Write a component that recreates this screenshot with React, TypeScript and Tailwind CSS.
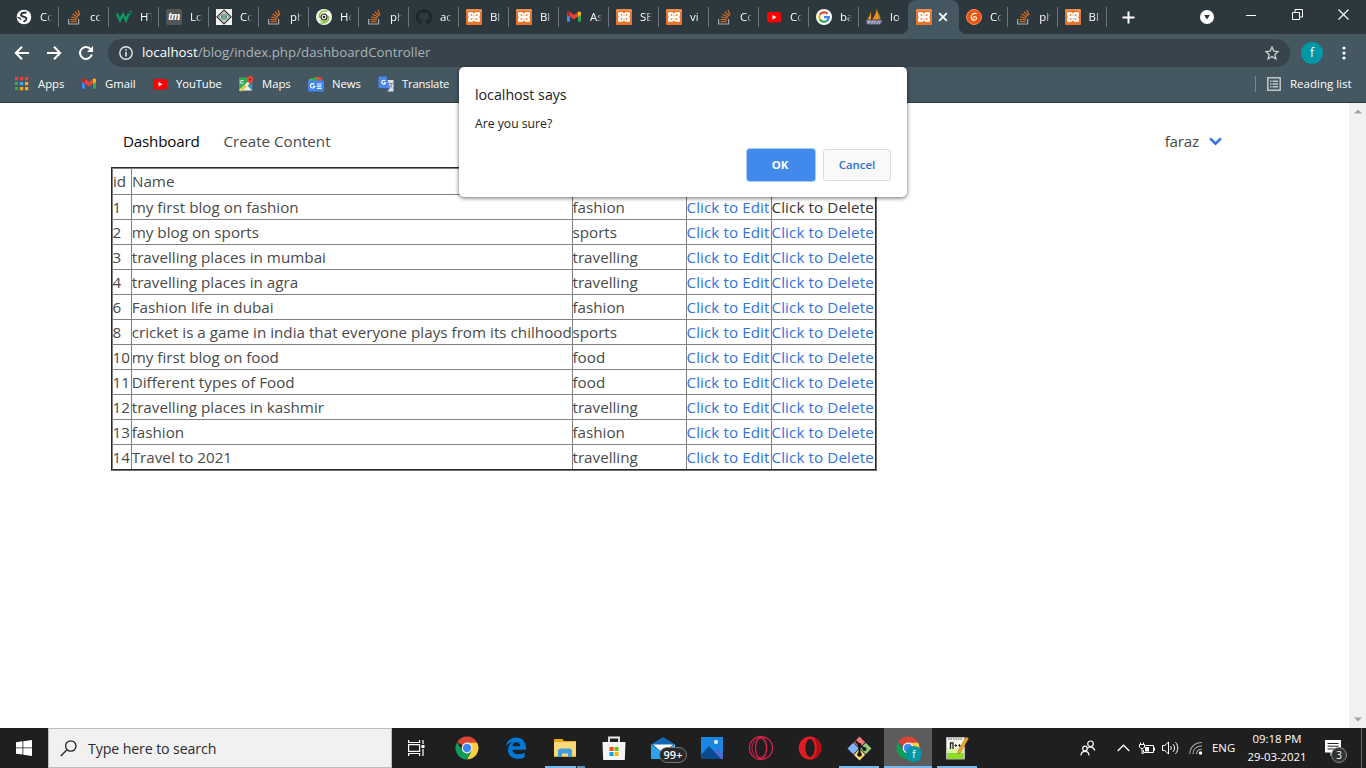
import type { ReactNode } from "react";

const XamppIcon = () => (
  <svg width="16" height="16" viewBox="0 0 16 16">
    <rect width="16" height="16" rx="1" fill="#e9742a" />
    <path d="M1 3V1h14v2" stroke="#f3a56f" fill="none" />
    <path d="M2.500 3.700h4L8 5l1.500-1.300h4V6.500L12.700 8l.8 1.500v2.800h-4L8 11l-1.500 1.300h-4V9.500L3.300 8l-.8-1.500z" fill="#fff" stroke="#fff" strokeLinejoin="round" />
    <path d="M4.700 6.100h1.600M9.700 6.100h1.600M4.700 9.900h1.600M9.700 9.900h1.600" stroke="#e9742a" strokeWidth="1.500" />
    <path d="M8 5.500v1M8 9.500v1" stroke="#e9742a" />
  </svg>
);
const StackIcon = () => (
  <svg width="16" height="16" viewBox="0 0 16 16" fill="none">
    <path d="M2.600 10v5h10v-5" stroke="#a5a9ac" strokeWidth="1.200" />
    <path d="M4.500 12.700h6.300M4.600 10.400l6.200.6M5.200 7.800l6 1.700M6.600 5l5.400 3.200M9 2.600l4 4.600M12 1l1.900 5.200" stroke="#e0701c" strokeWidth="1.150" />
  </svg>
);
const GlobeIcon = () => (
  <svg width="16" height="16" viewBox="0 0 16 16">
    <circle cx="8" cy="8" r="7.300" fill="#fff" />
    <path d="M10.500 3.500C8 3.500 5 4.200 5 6c0 2.200 5.500 1.200 5.500 3.700 0 1.800-2 2-2.800 3.300" stroke="#2d383f" strokeWidth="1.900" fill="none" />
    <path d="M1.500 8.500c2 .2 3 .8 3.500 2.300" stroke="#2d383f" strokeWidth="1.300" fill="none" />
  </svg>
);
const W3Icon = () => (
  <svg width="16" height="16" viewBox="0 0 16 16" fill="none">
    <path d="M.8 4.500 4 11.300l3-6 3 6 2.800-6.500" stroke="#0b9b61" strokeWidth="2.400" />
    <path d="M13 2h2.300l-1.200 1.400c1.600 0 1.600 2.100 0 2.100l-1.200-.4" stroke="#0b9b61" strokeWidth=".8" />
  </svg>
);
const TmIcon = () => (
  <span className="flex h-4 w-4 items-center justify-center rounded-xs bg-[#555] pb-0.5 font-['Liberation_Serif',serif] text-[12px] leading-none font-bold tracking-[-0.500px] text-white italic">tm</span>
);
const DiamondIcon = () => (
  <svg width="16" height="16" viewBox="0 0 16 16" fill="none">
    <rect width="16" height="16" fill="#f5f5f5" />
    <path d="m8 1 7 7-7 7-7-7z" stroke="#333" strokeWidth="1.200" />
    <path d="m8 3 5 5-5 5-5-5z" stroke="#888" strokeWidth=".7" />
    <circle cx="8" cy="8" r="3" fill="#4f8d69" />
    <path d="M6.500 7h3M6.500 9.300h3" stroke="#dfe9e3" strokeWidth=".8" />
  </svg>
);
const SpiralIcon = () => (
  <svg width="16" height="16" viewBox="0 0 16 16" fill="none">
    <circle cx="8" cy="8" r="8" fill="#f6faef" />
    <path d="M11.500 2C5.500 1 2.300 4.500 3.500 9M4.500 14c6 1 9.200-2.500 8-7" stroke="#8cc63f" strokeWidth="1.500" />
    <circle cx="8" cy="8" r="3" stroke="#222" strokeWidth="1.200" />
    <circle cx="8" cy="8" r="1.200" fill="#222" />
    <path d="M3.800 10.800c2.200 2.400 6 2.300 7.700.7" stroke="#8cc63f" strokeWidth="1.200" />
  </svg>
);
const GithubIcon = () => (
  <svg width="16" height="16" viewBox="0 0 16 16">
    <path fill="#1d272e" d="M8 0C3.580 0 0 3.580 0 8c0 3.540 2.290 6.530 5.470 7.590.4.070.55-.17.55-.38 0-.19-.01-.82-.01-1.490-2.010.37-2.530-.49-2.690-.94-.09-.23-.48-.94-.82-1.130-.28-.15-.68-.52-.01-.53.63-.01 1.080.58 1.230.82.72 1.210 1.870.87 2.330.66.07-.52.28-.87.51-1.070-1.780-.2-3.640-.89-3.640-3.950 0-.87.31-1.590.82-2.150-.08-.2-.36-1.020.08-2.120 0 0 .67-.21 2.200.82.64-.18 1.320-.27 2-.27s1.360.09 2 .27c1.530-1.040 2.200-.82 2.200-.82.44 1.100.16 1.920.08 2.120.51.56.82 1.270.82 2.150 0 3.070-1.870 3.750-3.650 3.950.29.25.54.73.54 1.480 0 1.070-.01 1.930-.01 2.200 0 .21.15.46.55.38A8.010 8.010 0 0 0 16 8c0-4.420-3.580-8-8-8" />
  </svg>
);
const GmailIcon = () => (
  <svg width="16" height="16" viewBox="0 0 16 16">
    <path d="M1 4.500v8.300h3V7.500z" fill="#4285f4" />
    <path d="M15 4.500v8.300h-3V7.500z" fill="#34a853" />
    <path d="M12 3.500V8l3-2.300V4.300C15 2.500 13.200 2 12 3z" fill="#fbbc04" />
    <path d="M1 4.300C1 2.500 2.800 2 4 3l4 3 4-3v4.600l-4 3-4-3L1 5.500z" fill="#ea4335" />
    <path d="M1 4.300C1 2.500 2.800 2 4 3v4.700L1 5.500z" fill="#c5221f" />
  </svg>
);
const YoutubeIcon = () => (
  <svg width="16" height="16" viewBox="0 0 16 16">
    <rect x="1" y="3" width="14" height="10.500" rx="2.600" fill="#f00" />
    <path d="m6.500 6 4 2.250-4 2.250z" fill="#fff" />
  </svg>
);
const GoogleIcon = () => (
  <svg width="16" height="16" viewBox="0 0 16 16" fill="none" strokeWidth="2.200">
    <circle cx="8" cy="8" r="8" fill="#fff" />
    <path d="M11.500 4.800A4.800 4.800 0 0 0 3.800 5.700" stroke="#ea4335" />
    <path d="M3.800 5.700a4.800 4.800 0 0 0 0 4.600" stroke="#fbbc05" />
    <path d="M3.800 10.300a4.800 4.800 0 0 0 7.300 1.300" stroke="#34a853" />
    <path d="M11.100 11.600c1.200-1 1.700-2.200 1.700-3.400H8" stroke="#4285f4" />
  </svg>
);
const PmaIcon = () => (
  <svg width="16" height="16" viewBox="0 0 16 16">
    <path d="M5 2v8.500H1.200C3 8 4.500 5 5 2zM10.500 0c1.500 3 3 7 2.500 10.500H6C8.500 8 10.300 4 10.500 0z" fill="#f29111" />
    <path d="M11.500 3c1.800 2 3.200 5 3 7.500h-2z" fill="#b0803a" />
    <path d="M0 11h16v2l-2 2.500H2L.5 14z" fill="#777a9b" />
    <path d="M2 15v-3h2v1.500H2M6 15v-3l1.500 1.500L9 12v3M11 15l1.500-3 1.500 3" stroke="#c9cbe0" strokeWidth=".7" fill="none" />
  </svg>
);
const OrangeCircleIcon = () => (
  <svg width="16" height="16" viewBox="0 0 16 16">
    <circle cx="8" cy="8" r="7.500" fill="#f0530f" stroke="#f58a5c" />
    <path d="M10.500 4.500C7 3.800 5 6 5.200 8.500c.2 2 1.500 3 3 2.900 3-.2 3-4 .3-3.900-1.200.1-1.700 1.100-1.200 2" stroke="#fff" strokeWidth="1.100" fill="none" strokeLinecap="round" />
  </svg>
);
const MapsIcon = () => (
  <svg width="16" height="16" viewBox="0 0 16 16">
    <path d="M1 1.500h13v13H1z" fill="#34a853" />
    <path d="M2 14.500 8 8l6 6.500z" fill="#eee" />
    <path d="m14.500 8.500-3.500 1 3.500 5z" fill="#4285f4" />
    <path d="m1 14 12-11 1.500 2L3 15.500z" fill="#f4f4f4" />
    <path d="m7 9 1.700 1.500L3.500 15H1.200z" fill="#fbbc04" />
    <path d="M5.500 4.500H3.800a1.500 1.500 0 1 0 1.300 1.800" stroke="#fff" fill="none" />
    <path d="M12 0a3.200 3.200 0 0 1 3.200 3.200c0 2-2.400 2.800-3.200 6-.8-3.200-3.200-4-3.200-6A3.200 3.200 0 0 1 12 0z" fill="#ea4335" />
    <circle cx="12" cy="3.300" r="1.100" fill="#8f1d14" />
  </svg>
);
const NewsIcon = () => (
  <svg width="16" height="16" viewBox="0 0 16 16" fill="none">
    <path d="m1 3.500 9-2.500 1 4H1z" fill="#fbbc04" />
    <path d="m8.500.5 6 1.500-1 4h-5z" fill="#ea4335" />
    <path d="M2.500 2H10v4H2.500z" fill="#34a853" />
    <rect y="4.500" width="16" height="11" rx="1" fill="#4285f4" />
    <path d="M6.300 8.300a2.200 2.200 0 1 0 .5 2H5M9 8h4.500M9 10.200h4.500M9 12.400h4.500" stroke="#fff" strokeWidth="1.200" />
  </svg>
);
const TranslateIcon = () => (
  <svg width="16" height="16" viewBox="0 0 16 16" fill="none">
    <path d="M7 4h8.500v11.500H9.500z" fill="#dfe2e6" />
    <path d="M1 .5h7.500L12 12H1.500a1 1 0 0 1-1-1V1z" fill="#4b87e8" />
    <path d="m8 12 1.600 3.500L12 12z" fill="#2b5fc0" />
    <path d="M7.200 4.800a2 2 0 1 0 .5 1.900H5.800" stroke="#fff" strokeWidth="1.100" />
    <path d="M10.500 7.500h4.300M12.500 6.500v1M14 7.700c-.4 1.800-1.300 3.200-2.500 4.100M11.700 9c.6 1.300 1.500 2.200 2.800 3" stroke="#6b7a8c" strokeWidth=".8" />
  </svg>
);
const AppsIcon = () => (
  <svg width="16" height="16" viewBox="0 0 16 16">
    <path d="M1 1h3.200v3.200H1zM6 1h3.200v3.200H6zM11 1h3.200v3.200H11z" fill="#ea4335" />
    <path d="M1 6h3.200v3.200H1z" fill="#34a853" />
    <path d="M6 6h3.200v3.200H6z" fill="#4a9cf5" />
    <path d="M11 6h3.200v3.200H11zM6 11h3.200v3.200H6zM11 11h3.200v3.200H11z" fill="#fbab18" />
    <path d="M1 11h3.200v3.200H1z" fill="#34a853" />
  </svg>
);

interface TabInfo { icon: ReactNode; title: string }
const leftTabs: TabInfo[] = [
  { icon: <GlobeIcon />, title: "Co" },
  { icon: <StackIcon />, title: "cc" },
  { icon: <W3Icon />, title: "HT" },
  { icon: <TmIcon />, title: "Lo" },
  { icon: <DiamondIcon />, title: "Co" },
  { icon: <StackIcon />, title: "ph" },
  { icon: <SpiralIcon />, title: "Ho" },
  { icon: <StackIcon />, title: "ph" },
  { icon: <GithubIcon />, title: "ac" },
  { icon: <XamppIcon />, title: "Bl" },
  { icon: <XamppIcon />, title: "Bl" },
  { icon: <GmailIcon />, title: "As" },
  { icon: <XamppIcon />, title: "SE" },
  { icon: <XamppIcon />, title: "vi" },
  { icon: <StackIcon />, title: "Co" },
  { icon: <YoutubeIcon />, title: "Co" },
  { icon: <GoogleIcon />, title: "ba" },
  { icon: <PmaIcon />, title: "lo" },
];
const rightTabs: TabInfo[] = [
  { icon: <OrangeCircleIcon />, title: "Co" },
  { icon: <StackIcon />, title: "ph" },
  { icon: <XamppIcon />, title: "Bl" },
];

const TabContent = ({ icon, title }: TabInfo) => (
  <>
    <span className="h-4 w-4 shrink-0">{icon}</span>
    <span className="ml-2 w-3 overflow-hidden text-[11.400px] leading-4 whitespace-nowrap text-white [mask-image:linear-gradient(to_right,black_55%,transparent)]">{title}</span>
  </>
);

const TabStrip = () => (
  <div className="flex h-[34px] bg-[#2c373e] pl-[9px]">
    {leftTabs.map((tab, i) => (
      <div key={i} className="flex h-[34px] w-[50px] shrink-0 items-center pl-[7px]">
        <TabContent {...tab} />
        {i < leftTabs.length - 1 && <span className="ml-auto h-5 w-px bg-[#6a747a]" />}
      </div>
    ))}
    <div className="relative -ml-px flex h-[34px] w-[51px] shrink-0 items-center rounded-t-lg bg-[#455760] pl-2">
      <span className="absolute bottom-0 -left-2 h-2 w-2 bg-[radial-gradient(circle_at_0_0,transparent_8px,#455760_8.5px)]" />
      <span className="absolute -right-2 bottom-0 h-2 w-2 bg-[radial-gradient(circle_at_100%_0,transparent_8px,#455760_8.5px)]" />
      <XamppIcon />
      <svg className="ml-1.5" width="10" height="10" viewBox="0 0 10 10"><path d="m1.200 1.200 7.600 7.600m0-7.600L1.200 8.800" stroke="#fff" strokeWidth="1.800" /></svg>
    </div>
    {rightTabs.map((tab, i) => (
      <div key={i} className="flex h-[34px] w-[49.300px] shrink-0 items-center pl-[7px]">
        <TabContent {...tab} />
        <span className="ml-auto h-5 w-px bg-[#6a747a]" />
      </div>
    ))}
    <div className="flex flex-1 items-center">
      <svg className="ml-[15px]" width="13" height="13" viewBox="0 0 13 13"><path d="M6.500.5v12M.5 6.500h12" stroke="#fff" strokeWidth="2" /></svg>
      <svg className="ml-[65px]" width="14" height="14" viewBox="0 0 14 14"><circle cx="7" cy="7" r="7" fill="#fff" /><path d="M4 5h6L7 9.500z" fill="#2c373e" /></svg>
      <svg className="mb-1 ml-8" width="10" height="10" viewBox="0 0 10 10"><path d="M0 5.500h10" stroke="#fff" /></svg>
      <svg className="mb-1.5 ml-9" width="11" height="11" viewBox="0 0 11 11" fill="none" stroke="#fff"><path d="M.5 3.500h7v7h-7zM3 3V.5h7.500V8H8" /></svg>
      <svg className="mb-1.5 ml-[35px]" width="11" height="11" viewBox="0 0 11 11"><path d="m.5.5 10 10m0-10-10 10" stroke="#fff" strokeWidth="1.100" /></svg>
    </div>
  </div>
);

const Toolbar = () => (
  <div className="flex h-[33px] items-center bg-[#455760]">
    <div className="mt-1 flex w-[108px] items-center gap-4 pl-3.5">
      <svg width="16" height="16" viewBox="0 0 16 16" fill="none" stroke="#fff" strokeWidth="2"><path d="M15 8H2.500M8 1.800 1.800 8 8 14.200" /></svg>
      <svg width="16" height="16" viewBox="0 0 16 16" fill="none" stroke="#fff" strokeWidth="2"><path d="M1 8h12.500M8 1.800 14.200 8 8 14.200" /></svg>
      <svg width="16" height="16" viewBox="0 0 16 16" fill="none" stroke="#fff" strokeWidth="2"><path d="M13.800 9.500A6 6 0 1 1 12.500 4L14 5.500" /><path d="M15 1v6H9z" fill="#fff" stroke="none" /></svg>
    </div>
    <div className="mt-1 flex h-7 w-[1182px] items-center rounded-full bg-[#38444c] pl-[11px] text-[13.300px] text-[#a9b2b8]">
      <svg width="14" height="14" viewBox="0 0 14 14" fill="none" stroke="#e4e7e9" strokeWidth="1.400"><circle cx="7" cy="7" r="6.200" /><path d="M7 6v4.500M7 3.300v1.500" strokeWidth="1.600" /></svg>
      <span className="ml-[9px] whitespace-nowrap"><span className="text-white">localhost</span>/blog/index.php/dashboardController</span>
      <svg className="mr-[11px] ml-auto" width="14" height="14" viewBox="0 0 14 14"><path d="m7 1 1.800 4.100 4.500.4-3.400 3 1 4.400L7 10.600l-3.900 2.300 1-4.400-3.400-3 4.500-.4z" fill="none" stroke="#c8cdd0" strokeWidth="1.300" /></svg>
    </div>
    <span className="mt-1 ml-[11px] flex h-[22px] w-[22px] items-center justify-center rounded-full bg-[#0097a7] text-[12px] leading-none text-white">f</span>
    <svg className="mt-1 ml-[19px]" width="4" height="14" viewBox="0 0 4 14" fill="#fff"><circle cx="2" cy="2" r="1.600" /><circle cx="2" cy="7" r="1.600" /><circle cx="2" cy="12" r="1.600" /></svg>
  </div>
);

const Bookmark = ({ icon, label, width }: { icon: ReactNode; label: string; width: string }) => (
  <div className={`flex shrink-0 items-center gap-2 ${width}`}>
    {icon}
    <span className="pt-px">{label}</span>
  </div>
);

const BookmarksBar = () => (
  <div className="flex h-9 items-center border-b border-[#2c373e] bg-[#455760] pb-px pl-3.5 text-[11.300px] text-white">
    <Bookmark icon={<AppsIcon />} label="Apps" width="w-[67px]" />
    <Bookmark icon={<GmailIcon />} label="Gmail" width="w-[71px]" />
    <Bookmark icon={<YoutubeIcon />} label="YouTube" width="w-[86px] tracking-[-0.100px]" />
    <Bookmark icon={<MapsIcon />} label="Maps" width="w-[70px]" />
    <Bookmark icon={<NewsIcon />} label="News" width="w-[70px]" />
    <Bookmark icon={<TranslateIcon />} label="Translate" width="w-[90px] tracking-[-0.200px]" />
    <div className="mr-[14px] ml-auto flex items-center">
      <span className="h-4 w-px bg-[#7b878e]" />
      <svg className="mr-2 ml-[11px]" width="14" height="14" viewBox="0 0 14 14" fill="none" stroke="#c3c8cb"><rect x=".8" y=".8" width="12.400" height="12.400" strokeWidth="1.500" /><path d="M3 4.200h1.500M3 7h1.500M3 9.800h1.500M5.500 4.200H11M5.500 7H11M5.500 9.800H11" strokeWidth="1.400" /></svg>
      <span className="w-[63px] pl-px text-[11.500px] whitespace-nowrap">Reading list</span>
    </div>
  </div>
);

const rows: [string, string, string][] = [
  ["1", "my first blog on fashion", "fashion"],
  ["2", "my blog on sports", "sports"],
  ["3", "travelling places in mumbai", "travelling"],
  ["4", "travelling places in agra", "travelling"],
  ["6", "Fashion life in dubai", "fashion"],
  ["8", "cricket is a game in india that everyone plays from its chilhood", "sports"],
  ["10", "my first blog on food", "food"],
  ["11", "Different types of Food", "food"],
  ["12", "travelling places in kashmir", "travelling"],
  ["13", "fashion", "fashion"],
  ["14", "Travel to 2021", "travelling"],
];

const PostsTable = () => (
  <div className="ml-[111px] w-[766px] border border-[#2b2b2b] border-r-[#6f6f6f] border-b-[#6f6f6f]">
    <div className="border border-t-[#808080] border-r-[#2b2b2b] border-b-[#2b2b2b] border-l-[#808080] text-[15.200px] leading-6 whitespace-nowrap text-[#4a4a4a]">
      <div className="grid h-[26px] grid-cols-[19px_441px_114px_85px_103px] border-b border-[#808080] leading-[25px]">
        <span className="border-r border-[#808080]">id</span>
        <span className="border-r border-[#808080]">Name</span>
        <span className="border-r border-[#808080]" />
        <span className="border-r border-[#808080]" />
        <span />
      </div>
      {rows.map(([id, name, category], i) => (
        <div key={id} className="grid h-[25px] grid-cols-[19px_441px_114px_85px_103px] border-b border-[#808080] last:h-6 last:border-b-0">
          <span className="border-r border-[#808080] -indent-[0.500px]">{id}</span>
          <span className="border-r border-[#808080] -indent-[0.300px] tracking-[0.015px]">{name}</span>
          <span className="border-r border-[#808080] -indent-[0.500px]">{category}</span>
          <a className="border-r border-[#808080] -indent-[0.500px] tracking-[0.080px] text-[#3273dc]">Click to Edit</a>
          <a className={`-indent-[0.500px] tracking-[0.100px] ${i === 0 ? "text-[#363636]" : "text-[#3273dc]"}`}>Click to Delete</a>
        </div>
      ))}
    </div>
  </div>
);

const Page = () => (
  <div className="flex h-[625px] bg-white">
    <main className="flex-1">
      <nav className="flex h-16 items-center pt-3 pr-[127px] pl-[123px] text-[15.200px] text-[#4a4a4a]">
        <a className="w-[100.500px] tracking-[-0.200px] text-[#0a0a0a]">Dashboard</a>
        <a className="tracking-[-0.020px]">Create Content</a>
        <a className="ml-auto tracking-[-0.200px]">faraz</a>
        <svg className="ml-2.5" width="13" height="9" viewBox="0 0 13 9" fill="none"><path d="m1 1.300 5.500 5.400L12 1.300" stroke="#3273dc" strokeWidth="2.500" /></svg>
      </nav>
      <PostsTable />
    </main>
    <div className="flex w-[17px] flex-col items-center justify-between bg-[#f1f1f1] py-1.5">
      <svg width="8" height="5" viewBox="0 0 8 5"><path d="m4 .5 4 4H0z" fill="#a3a3a3" /></svg>
      <svg width="8" height="5" viewBox="0 0 8 5"><path d="m4 4.500 4-4H0z" fill="#a3a3a3" /></svg>
    </div>
  </div>
);

const Dialog = () => (
  <div className="absolute top-[67px] left-[459px] flex h-[130px] w-[448px] flex-col rounded-[5px] bg-white px-4 pt-[17px] pb-4 text-[#202124] shadow-[0_1px_4px_rgba(0,0,0,0.6)]">
    <span className="text-[14.200px] leading-[22px]">localhost says</span>
    <span className="mt-[9px] text-[12.200px] leading-[18px]">Are you sure?</span>
    <div className="mt-auto flex justify-end gap-2 text-[11.400px] font-semibold">
      <button className="h-8 w-[68px] rounded-[3px] bg-[#4189eb] pr-0.5 text-[11.400px] font-bold text-white shadow-[0_0_0_1px_#a6c8f6]">OK</button>
      <button className="h-8 w-[68px] rounded-[3px] border border-[#dadce0] bg-[#fafafa] text-[#2a6fdb]">Cancel</button>
    </div>
  </div>
);

const ChromeIcon = () => (
  <svg width="24" height="24" viewBox="0 0 24 24">
    <path d="M12 12 2.040 6.250A11.500 11.500 0 0 1 21.960 6.250L12 12z" fill="#db4437" />
    <path d="M12 6.700h10.200A11.500 11.500 0 0 1 12 23.500l4.600-9z" fill="#ffcd40" />
    <path d="M2.040 6.250A11.500 11.500 0 0 0 12 23.500l4.700-8.700L7.300 14.600z" fill="#0f9d58" />
    <circle cx="12" cy="12" r="5.400" fill="#f1f1f1" />
    <circle cx="12" cy="12" r="4.200" fill="#4285f4" />
  </svg>
);
const EdgeIcon = () => (
  <svg width="22" height="22" viewBox="0 0 22 22">
    <path d="M.8 9.700C1.700 3.800 5.800.5 11 .5c6.500 0 10 4.600 10 10v2.300H7.300c.3 3.300 3.500 4.500 6.200 4.500 2.400 0 4.600-.7 6.200-1.700v4.600c-1.800 1-4.500 1.600-7 1.600-6 0-9.700-3.600-9.700-8.700 0-3.600 1.900-6.600 5.200-8C4.800 5.400 2.300 7 .8 9.700zm6.600-.5h7.700c0-2.700-1.400-4-3.700-4s-3.700 1.600-4 4z" fill="#0078d7" />
  </svg>
);
const FolderIcon = () => (
  <svg width="22" height="20" viewBox="0 0 22 20">
    <path d="M0 1h8.500l1.500 2h12v16H0z" fill="#e9a800" />
    <path d="M0 4h22v14H0z" fill="#fcd978" />
    <path d="M4 19v-7l2-1.500h10L18 12v7h-4v-3.500H8V19z" fill="#3e9fe3" />
  </svg>
);
const StoreIcon = () => (
  <svg width="24" height="24" viewBox="0 0 24 24">
    <path d="M7 7V1.500h10V7" stroke="#eee" strokeWidth="1.800" fill="none" />
    <path d="M.5 6h23l-.7 18H1.200z" fill="#f5f5f5" />
    <path d="M7.500 11h4v4h-4z" fill="#f25022" /><path d="M12.500 11h4v4h-4z" fill="#7fba00" />
    <path d="M7.500 16h4v4h-4z" fill="#00a4ef" /><path d="M12.500 16h4v4h-4z" fill="#ffb900" />
  </svg>
);
const MailIcon = () => (
  <svg width="24" height="24" viewBox="0 0 24 24">
    <path d="M0 8.500 12 1l12 7.500V22H0z" fill="#1369b4" />
    <path d="M2 8.500h20L12 17z" fill="#fff" />
    <path d="m0 8.500 12 8 12-8V23H0z" fill="#2ba3e8" />
    <path d="m12 16.500 12-8V23z" fill="#56c1f2" />
  </svg>
);
const PhotosIcon = () => (
  <svg width="22" height="22" viewBox="0 0 22 22">
    <rect width="22" height="22" fill="#1a86e3" />
    <path d="m10 22 7-11 5 6v5z" fill="#4f6bd0" />
    <path d="m0 18 8-9 12 13H0z" fill="#0b4a8f" />
    <circle cx="15" cy="5" r="2" fill="#fff" />
  </svg>
);
const OperaGxIcon = () => (
  <svg width="26" height="26" viewBox="0 0 26 26" fill="none" stroke="#d8204c">
    <circle cx="13" cy="13" r="11.500" strokeWidth="1.300" />
    <ellipse cx="13" cy="13" rx="5.500" ry="10.800" strokeWidth="1.300" />
    <path d="M9 4.500c4-3 9.800 1 9.800 8.500S13 24.500 9 21.500" />
    <path d="M8 4.500a11 11 0 0 0 0 17" />
  </svg>
);
const OperaIcon = () => (
  <svg width="24" height="24" viewBox="0 0 24 24">
    <ellipse cx="12" cy="12" rx="11.200" ry="11.500" fill="#e31b23" />
    <path d="M15 1.500C25.500 4 25.500 20 15 22.500c5-4 5-17 0-21z" fill="#b20c18" />
    <ellipse cx="12" cy="12" rx="4.700" ry="9" fill="#1f1f1f" />
  </svg>
);
const GitIcon = () => (
  <svg width="25" height="25" viewBox="0 0 25 25">
    <path d="m12.500.5 5.700 5.700-5.700 5.700-5.700-5.700z" fill="#f07878" />
    <path d="m6.200 6.800 5.700 5.700-5.700 5.700-5.700-5.700z" fill="#7fb2ff" />
    <path d="m18.800 6.800 5.700 5.700-5.700 5.700-5.700-5.700z" fill="#90cc7a" />
    <path d="m12.500 13.100 5.700 5.700-5.700 5.700-5.700-5.700z" fill="#ffd86e" />
    <path d="M8.500 5l4 4v10M12.500 9l5 4" stroke="#161616" strokeWidth="2" fill="none" />
    <circle cx="12.500" cy="9" r="2" fill="#161616" /><circle cx="17.500" cy="13" r="2" fill="#161616" /><circle cx="12.500" cy="18.500" r="2.300" fill="#161616" />
  </svg>
);
const NotepadIcon = () => (
  <svg width="24" height="24" viewBox="0 0 24 24">
    <path d="M1.500 1.500h18V23h-18z" fill="#f6f6ea" stroke="#bbb" />
    <path d="M2 16h17v7H2z" fill="#8fdc28" /><path d="M2 12.500h17V17H2z" fill="#d8f5a2" />
    <path d="M3 3h15" stroke="#888" strokeWidth="1.500" strokeDasharray="1.500 1" />
    <path d="M5.500 13V7h2.500v6" stroke="#222" strokeWidth="1.300" fill="none" />
    <path d="M9.500 9.500h2.500M10.800 8.200v2.600M13.200 9.500h2.500M14.500 8.200v2.600" stroke="#222" />
    <path d="m21 1 2.500 1.500-8 14L13 18l.2-3z" fill="#f3a92b" stroke="#a36712" strokeWidth=".6" />
  </svg>
);

const TaskButton = ({ children, running, active, windows }: { children: ReactNode; running?: boolean; active?: boolean; windows?: boolean }) => (
  <div className={`relative flex h-10 w-12 shrink-0 items-center justify-center ${active ? "bg-[#5c5c5c]" : ""}`}>
    {children}
    {(running || active) && (
      <span className={`absolute bottom-0 flex h-0.5 justify-end bg-[#76b9ed] ${active ? "w-12" : "w-10"}`}>
        {windows && <span className="h-0.5 w-[9px] border-l border-[#1f1f1f] bg-[#5a8fb8]" />}
      </span>
    )}
  </div>
);

const Taskbar = () => (
  <div className="flex h-10 items-center bg-[#1f1f1f] text-white">
    <div className="flex w-12 justify-center">
      <svg width="16" height="16" viewBox="0 0 16 16" fill="#fff"><path d="M0 2.200 6.500 1.300v6.200H0zM7.300 1.200 16 0v7.500H7.300zM0 8.300h6.500v6.300L0 13.700zM7.300 8.300H16V16l-8.700-1.300z" /></svg>
    </div>
    <div className="flex h-10 w-[344px] items-center border border-[#bdbdbd] bg-[#f1f1f1] pl-[11px]">
      <svg width="17" height="17" viewBox="0 0 17 17" fill="none" stroke="#222" strokeWidth="1.300"><circle cx="10.800" cy="6" r="5.200" /><path d="M7 9.800.8 16" /></svg>
      <span className="mt-px ml-[11px] text-[14.200px] tracking-[-0.120px] text-[#2b2b2b]">Type here to search</span>
    </div>
    <div className="flex w-[51px] pl-4">
      <svg width="17" height="16" viewBox="0 0 17 16" fill="none" stroke="#fff" strokeWidth="1.200"><path d="M.6 0v2.500h11V0M.6 16v-2.500h11V16M.6 4.600h11v6.800H.6zM15 0v4M15 9v7" /><path d="M13.500 5h3v3h-3z" fill="#fff" stroke="none" /></svg>
    </div>
    <div className="flex gap-px">
      <TaskButton><ChromeIcon /></TaskButton>
      <TaskButton><EdgeIcon /></TaskButton>
      <TaskButton running windows><FolderIcon /></TaskButton>
      <TaskButton><StoreIcon /></TaskButton>
      <TaskButton>
        <MailIcon />
        <span className="absolute top-[19px] left-[20px] flex h-4 w-7 items-center justify-center rounded-full border border-[#777] bg-[#2a2a2a] text-[11px] font-semibold">99+</span>
      </TaskButton>
      <TaskButton><PhotosIcon /></TaskButton>
      <TaskButton><OperaGxIcon /></TaskButton>
      <TaskButton><OperaIcon /></TaskButton>
      <TaskButton running><GitIcon /></TaskButton>
      <TaskButton active>
        <ChromeIcon />
        <span className="absolute top-[18px] left-[22px] flex h-4 w-4 items-center justify-center rounded-full bg-[#0097a7] text-[10px]">f</span>
      </TaskButton>
      <TaskButton running><NotepadIcon /></TaskButton>
    </div>
    <div className="ml-auto flex h-10 items-center">
      <svg width="16" height="16" viewBox="0 0 16 16" fill="none" stroke="#fff" strokeWidth="1.200"><circle cx="10.500" cy="3.800" r="2.800" /><path d="M7.500 8.500C9 6.500 13.500 6 14.800 10.500" /><circle cx="5" cy="8.500" r="2.300" /><path d="M1 15.500c0-5.500 8-5.500 8 0" /></svg>
      <svg className="ml-[21px]" width="13" height="8" viewBox="0 0 13 8" fill="none" stroke="#fff" strokeWidth="1.300"><path d="m.7 7 5.800-5.800L12.300 7" /></svg>
      <svg className="ml-[9px]" width="16" height="13" viewBox="0 0 16 13" fill="none" stroke="#fff"><path d="M6.500 3.500h8v7H4.500V8M15.500 5.500v3M1.500.5v2M4.500.5v2M.5 2.500h5V5L4 6.500H2L.5 5zM3 6.500v5h1.500" /><path d="M6 5h4v4.500H6z" fill="#fff" stroke="none" /></svg>
      <svg className="ml-[7px]" width="17" height="14" viewBox="0 0 17 14" fill="none" stroke="#fff"><path d="M.5 4.500h2.300L6.500 1v12L2.800 9.500H.5zM8.500 5c1 1.200 1 2.800 0 4M11 3.200c2 2.200 2 5.400 0 7.600M13.500 1.200c3 3.500 3 8.100 0 11.600" /></svg>
      <svg className="ml-[10px]" width="14" height="14" viewBox="0 0 14 14" fill="none" stroke="#aaa"><path d="M.7 13C1 6 6 1.500 13 1.500M4 13c.3-5 3.500-8 9-8M7.500 13c.3-3 2-4.800 5.500-4.800" strokeWidth="1.100" /><circle cx="11.500" cy="12" r="1.700" fill="#fff" stroke="none" /></svg>
      <span className="ml-[9px] w-[24px] text-[11.400px]">ENG</span>
      <div className="ml-2.5 flex w-[62px] flex-col items-center text-[11.400px] leading-[18px] whitespace-nowrap">
        <span>09:18 PM</span>
        <span className="tracking-[-0.050px]">29-03-2021</span>
      </div>
      <div className="relative ml-[15px] h-10 w-[38px]">
        <svg className="mt-3 ml-0.5" width="17" height="16" viewBox="0 0 17 16"><path d="M0 0h16v12.500H9L5.500 16v-3.500H0z" fill="#fff" /><path d="M2.500 3.500h11M2.500 6.200h11M2.500 9h11" stroke="#1f1f1f" /></svg>
        <span className="absolute top-[19px] left-2 flex h-4 w-4 items-center justify-center rounded-full border border-[#888] bg-[#333] text-[10px]">3</span>
      </div>
      <span className="mr-1 h-10 w-px bg-[#666]" />
    </div>
  </div>
);

export default function App() {
  return (
    <div className="relative h-[768px] w-[1366px] overflow-hidden bg-white font-['Open_Sans','Noto_Sans',sans-serif]">
      <TabStrip />
      <Toolbar />
      <BookmarksBar />
      <Page />
      <Taskbar />
      <Dialog />
    </div>
  );
}
